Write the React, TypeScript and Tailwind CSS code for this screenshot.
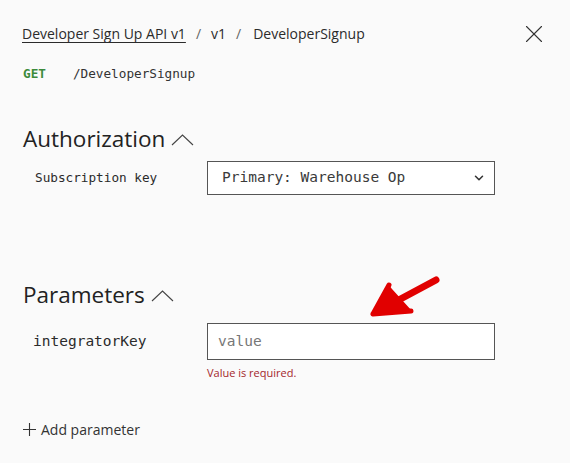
import { X, ChevronDown } from 'lucide-react';

const sans = "font-['Segoe_UI','Open_Sans',sans-serif]";
const mono = "font-['Consolas','DejaVu_Sans_Mono',monospace]";

function Caret() {
  return (
    <svg width="23" height="12" viewBox="0 0 23 12" className="ml-[6px] mt-[2px] text-[#444]" fill="none">
      <path d="M1 11 L11.5 1 L22 11" stroke="currentColor" strokeWidth="1.1" />
    </svg>
  );
}

function Arrow() {
  return (
    <svg
      className="pointer-events-none absolute left-[368px] top-[273px]"
      width="76"
      height="46"
      viewBox="0 0 76 46"
      fill="none"
    >
      <path d="M68 7 L12 37" stroke="#e10000" strokeWidth="7" strokeLinecap="round" />
      <path d="M5 41 L20 11 L24 16 L44 38 L40 40 Z" fill="#e10000" />
      <path d="M5 41 L21 12 M5 41 L43 38" stroke="#e10000" strokeWidth="5" strokeLinecap="round" strokeLinejoin="round" />
    </svg>
  );
}

export default function App() {
  return (
    <div className={`relative h-[463px] w-[570px] overflow-hidden bg-[#fafafa] ${sans} text-[#2b2b2b]`}>
      <div className="flex h-[20px] items-center justify-between pl-[22px] pr-[21px] mt-[24px]">
        <div className="flex items-center text-[14px] leading-5">
          <span className="underline underline-offset-[3px]">Developer Sign Up API v1</span>
          <span className="ml-[10px] text-[#666]">/</span>
          <span className="ml-[10px]">v1</span>
          <span className="ml-[10px] text-[#666]">/</span>
          <span className="ml-[12px]">DeveloperSignup</span>
        </div>
        <X size={30} strokeWidth={0.9} className="text-[#333]" />
      </div>

      <div className={`mt-[20px] flex items-center pl-[23px] text-[12.7px] leading-5 ${mono}`}>
        <span className="font-bold text-[#3c8a3c]">GET</span>
        <span className="ml-[27px] text-[#333]">/DeveloperSignup</span>
      </div>

      <section className="mt-[39px] pl-[23px]">
        <h2 className="flex items-center text-[22.5px] font-normal leading-8 text-[#222]">
          Authorization
          <Caret />
        </h2>
        <div className="mt-[6px] flex items-center">
          <div className={`w-[184px] pl-[12px] text-[12.7px] ${mono}`}>Subscription key</div>
          <div className="flex h-[34px] w-[288px] items-center justify-between border border-[#555] bg-white pl-[14px] pr-[8px]">
            <span className={`text-[14.5px] text-[#3a3a3a] ${mono}`}>Primary: Warehouse Op</span>
            <ChevronDown size={14} strokeWidth={2.6} className="text-[#333]" />
          </div>
        </div>
      </section>

      <section className="mt-[84px] pl-[23px]">
        <h2 className="flex items-center text-[22.5px] font-normal leading-8 text-[#222]">
          Parameters
          <Caret />
        </h2>
        <div className="mt-[12px] flex items-start">
          <div className={`flex h-[37px] w-[184px] items-center pl-[10px] text-[14.5px] ${mono}`}>integratorKey</div>
          <div>
            <div className="flex h-[37px] w-[288px] items-center border border-[#555] bg-white pl-[10px]">
              <span className={`text-[14.5px] text-[#777] ${mono}`}>value</span>
            </div>
            <div className="mt-[5px] text-[11px] leading-4 text-[#a4262c]">Value is required.</div>
          </div>
        </div>
      </section>

      <div className="mt-[38px] flex items-center pl-[23px] text-[14px] text-[#333]">
        <svg width="13" height="13" viewBox="0 0 13 13" className="mr-[5px]" fill="none">
          <path d="M6.5 0 V13 M0 6.5 H13" stroke="currentColor" strokeWidth="1.1" />
        </svg>
        Add parameter
      </div>

      <Arrow />
    </div>
  );
}
